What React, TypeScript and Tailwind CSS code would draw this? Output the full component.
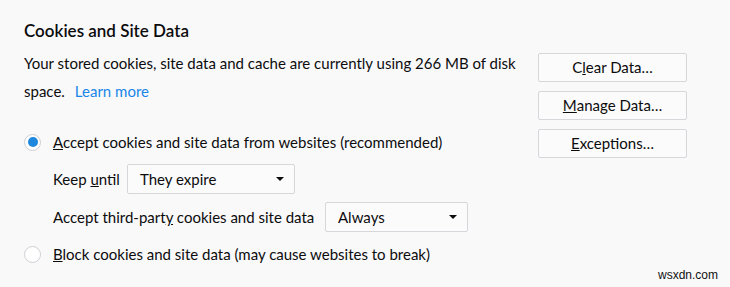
import React from 'react';

function Radio({ checked }: { checked?: boolean }) {
  return (
    <span className="w-[17px] h-[17px] shrink-0 rounded-full border border-[#cfcfd4] bg-white flex items-center justify-center">
      {checked && <span className="w-[10px] h-[10px] rounded-full bg-[#1f88dc]" />}
    </span>
  );
}

function Select({ value, width }: { value: string; width: string }) {
  return (
    <div
      className={`${width} h-[30px] flex items-center justify-between pl-[12px] pr-[10px] bg-[#fbfbfb] border border-[#d7d7db] rounded-[2px]`}
    >
      <span>{value}</span>
      <svg width="8" height="4" viewBox="0 0 8 4" className="fill-[#0c0c0d]">
        <path d="M0 0h8L4 4z" />
      </svg>
    </div>
  );
}

function Btn({ children }: { children: React.ReactNode }) {
  return (
    <button className="w-[149px] h-[29px] bg-[#fbfbfb] border border-[#d7d7db] rounded-[2px] text-[15px] text-[#0c0c0d] flex items-center justify-center">
      {children}
    </button>
  );
}

export default function App() {
  return (
    <div className="w-[730px] h-[287px] bg-[#f9f9fa] relative overflow-hidden text-[#0c0c0d] font-['Lato','Noto_Sans',sans-serif]">
      <div className="pl-6 pt-[18px]">
        <h2 className="text-[17px] font-semibold leading-[26px]">Cookies and Site Data</h2>

        <div className="flex mt-[5px]">
          {/* Left column */}
          <div className="w-[506px] text-[15px]">
            <p className="leading-[28px]">
              Your stored cookies, site data and cache are currently using 266 MB of disk
              <br />
              space.<a className="ml-[10px] text-[#1a86e8]">Learn more</a>
            </p>

            <div className="mt-[25px] h-[24px] flex items-center gap-[12px]">
              <Radio checked />
              <span>
                <u>A</u>ccept cookies and site data from websites (recommended)
              </span>
            </div>

            <div className="mt-[10px] pl-[29px] flex items-center">
              <span className="w-[74px] whitespace-nowrap">
                Keep <u>u</u>ntil
              </span>
              <Select value="They expire" width="w-[168px]" />
            </div>

            <div className="mt-[8px] pl-[29px] flex items-center">
              <span className="w-[272px] whitespace-nowrap">
                Accept third-part<u>y</u> cookies and site data
              </span>
              <Select value="Always" width="w-[143px]" />
            </div>

            <div className="mt-[10px] h-[24px] flex items-center gap-[12px]">
              <Radio />
              <span>
                <u>B</u>lock cookies and site data (may cause websites to break)
              </span>
            </div>
          </div>

          {/* Right column buttons */}
          <div className="ml-[8px] pt-[4px] flex flex-col gap-[9px]">
            <Btn>
              C<u>l</u>ear Data…
            </Btn>
            <Btn>
              <u>M</u>anage Data…
            </Btn>
            <Btn>
              <u>E</u>xceptions…
            </Btn>
          </div>
        </div>
      </div>

      <span className="absolute right-[12px] bottom-[5px] text-[12px] leading-[14px] text-[#111] font-['Liberation_Sans',sans-serif]">
        wsxdn.com
      </span>
    </div>
  );
}
